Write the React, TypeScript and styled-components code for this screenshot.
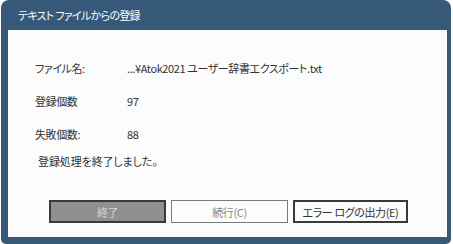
import React from "react";
import styled, { createGlobalStyle } from "styled-components";

const GlobalStyle = createGlobalStyle`
  html, body {
    margin: 0;
    padding: 0;
    background: #ffffff;
  }
  body {
    font-family: "Noto Sans CJK JP", "Noto Sans", sans-serif;
    font-feature-settings: "palt";
  }
`;

const Window = styled.div`
  box-sizing: border-box;
  width: 450px;
  height: 244px;
  margin-left: 1px;
  background: #36597a;
  border-radius: 8px 8px 5px 5px;
  padding: 0 4px 7px 7px;
  display: flex;
  flex-direction: column;
`;

const TitleBar = styled.div`
  height: 30px;
  display: flex;
  align-items: center;
  padding-left: 10px;
  box-sizing: border-box;
  color: #ffffff;
  font-size: 11px;
  letter-spacing: -0.7px;
`;

const Panel = styled.div`
  flex: 1;
  min-height: 0;
  background: #fcfcfc;
  display: flex;
  flex-direction: column;
  padding: 21px 0 0 27px;
  color: #333333;
  font-size: 11px;
  letter-spacing: -0.4px;
`;

const InfoRow = styled.div`
  display: grid;
  grid-template-columns: 92px 1fr;
  height: 33px;
  align-items: center;
  white-space: nowrap;
`;

const Label = styled.span``;

const Value = styled.span``;

const Message = styled.div`
  height: 22px;
  display: flex;
  align-items: center;
  padding-left: 3px;
  white-space: nowrap;
  letter-spacing: -0.1px;
`;

const ButtonRow = styled.div`
  display: flex;
  gap: 5px;
  margin-top: 28px;
  padding-left: 14px;
`;

type Variant = "disabled" | "muted" | "normal";

const Button = styled.button<{ $variant: Variant; $width: number }>`
  box-sizing: border-box;
  width: ${({ $width }) => $width}px;
  height: 23px;
  padding: 0;
  white-space: nowrap;
  font-family: inherit;
  font-feature-settings: "palt";
  font-size: 11px;
  letter-spacing: -0.4px;
  background: ${({ $variant }) => ($variant === "disabled" ? "#909090" : "#fcfcfc")};
  color: ${({ $variant }) =>
    $variant === "disabled" ? "#d6d6d6" : $variant === "muted" ? "#8a8a8a" : "#333333"};
  border: ${({ $variant }) =>
    $variant === "muted" ? "1px solid #7a7a7a" : "2px solid #3a3a3a"};
`;

export default function App() {
  return (
    <>
      <GlobalStyle />
      <Window>
        <TitleBar>テキスト ファイルからの登録</TitleBar>
        <Panel>
          <InfoRow>
            <Label>ファイル名:</Label>
            <Value>...¥Atok2021 ユーザー辞書エクスポート.txt</Value>
          </InfoRow>
          <InfoRow>
            <Label>登録個数</Label>
            <Value>97</Value>
          </InfoRow>
          <InfoRow>
            <Label>失敗個数:</Label>
            <Value>88</Value>
          </InfoRow>
          <Message>登録処理を終了しました。</Message>
          <ButtonRow>
            <Button $variant="disabled" $width={117}>終了</Button>
            <Button $variant="muted" $width={117}>続行(C)</Button>
            <Button $variant="normal" $width={115}>エラー ログの出力(E)</Button>
          </ButtonRow>
        </Panel>
      </Window>
    </>
  );
}
